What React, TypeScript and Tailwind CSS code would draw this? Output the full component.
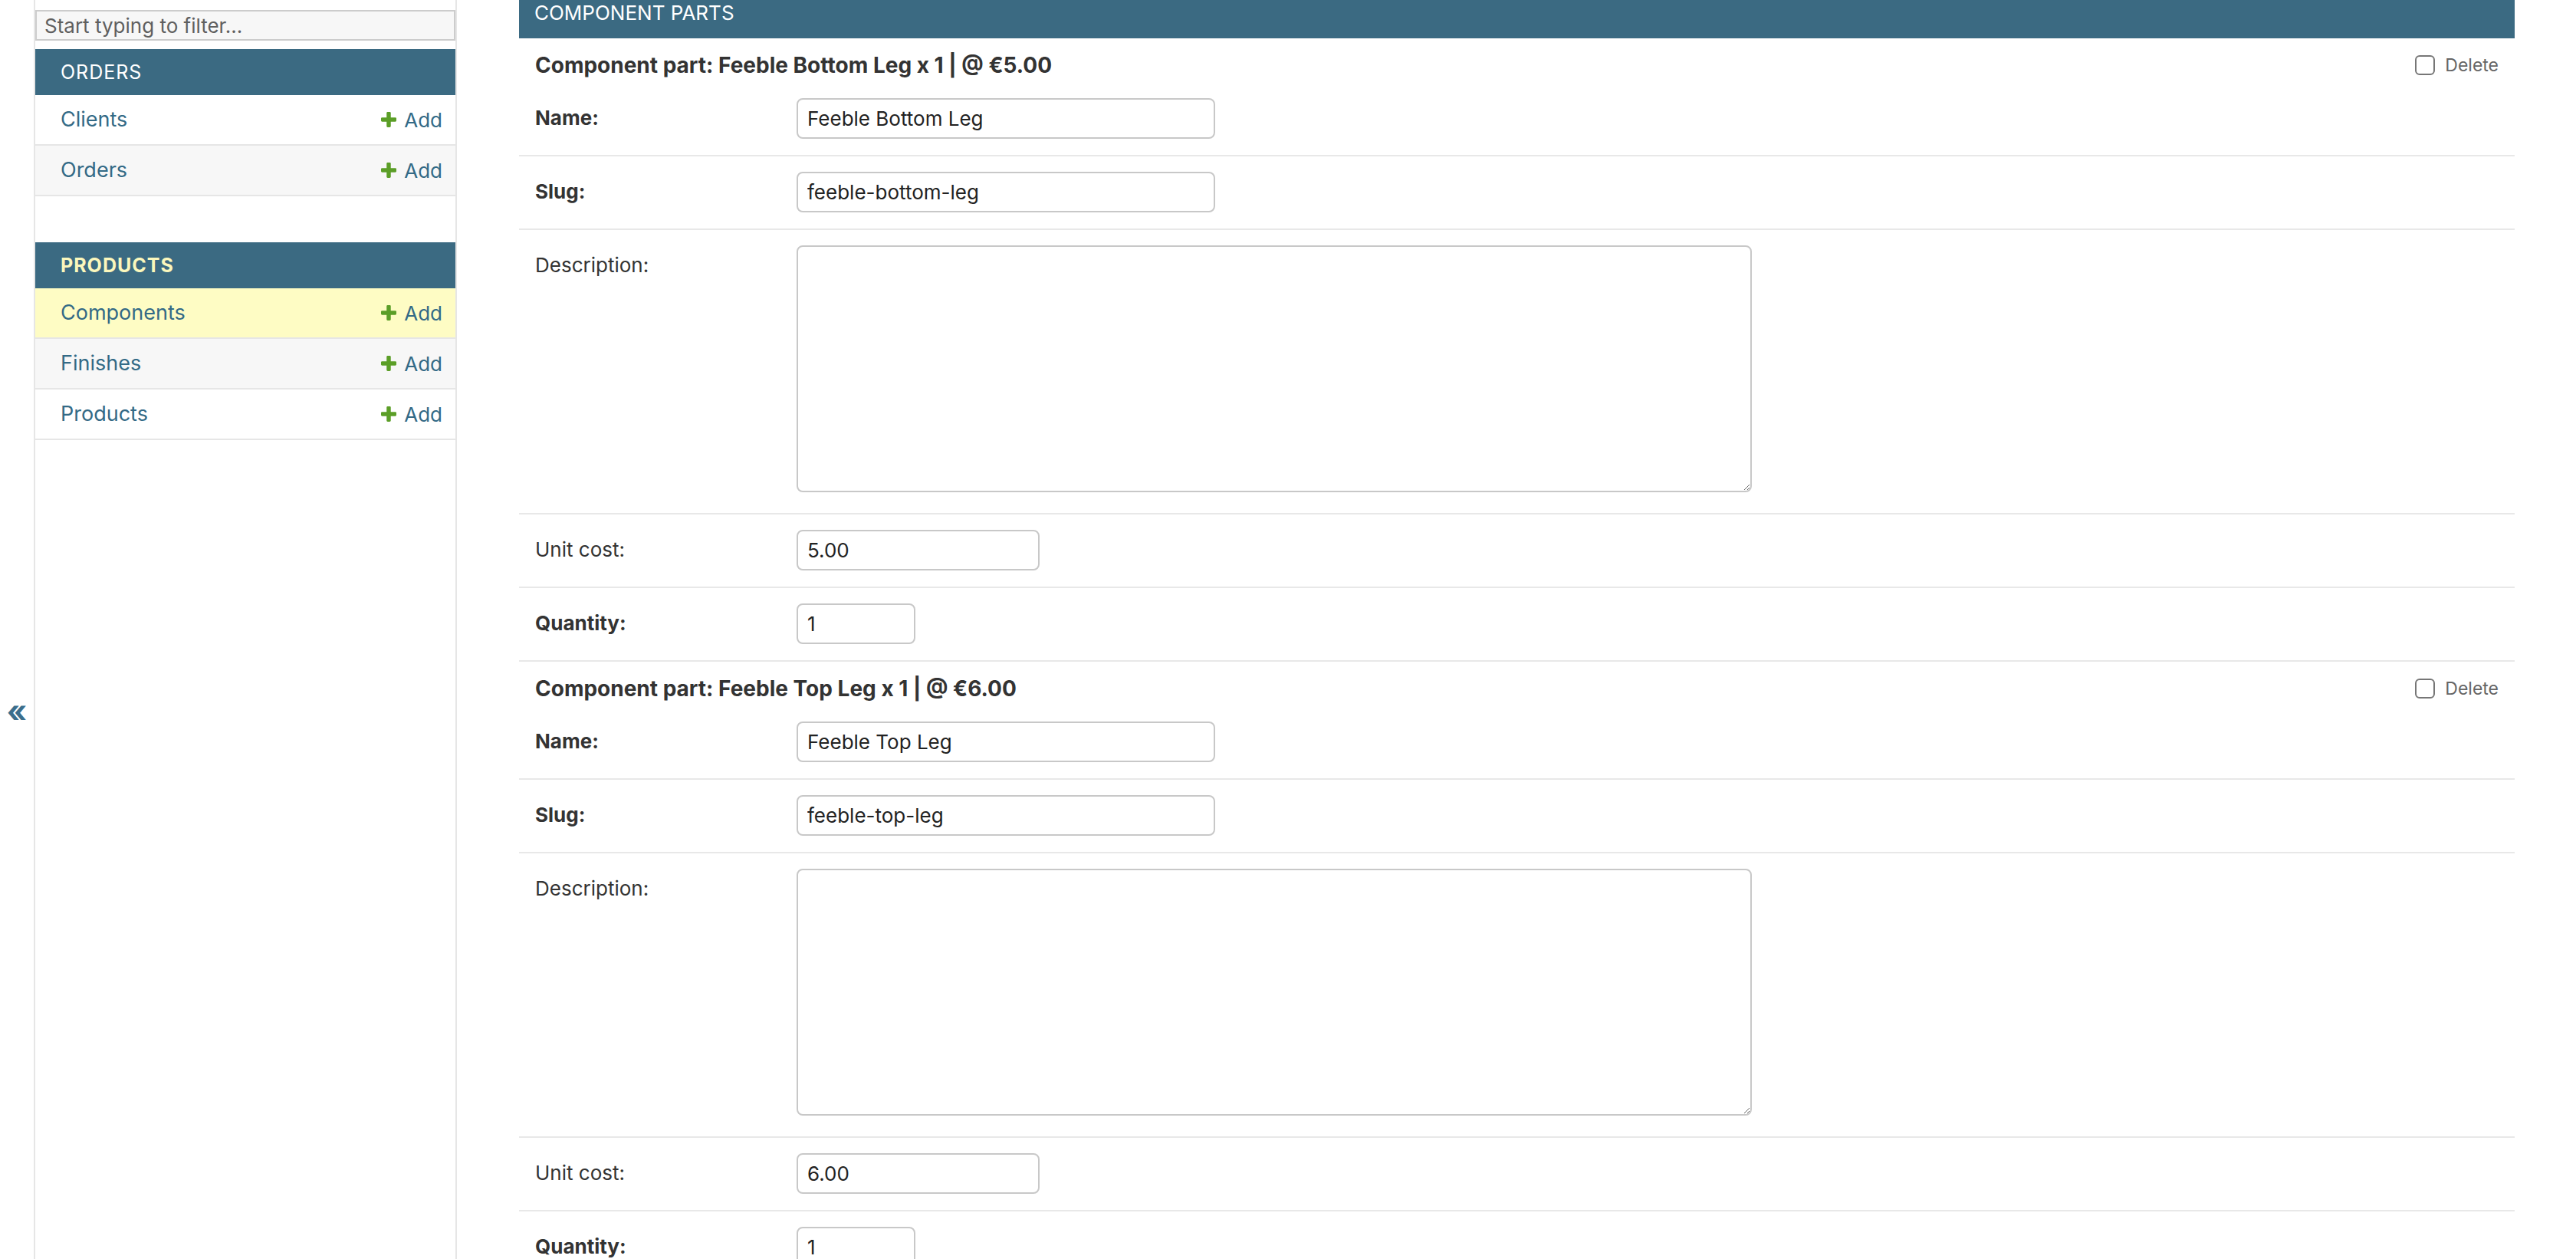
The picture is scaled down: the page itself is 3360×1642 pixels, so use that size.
import type { ReactNode } from "react";

const FONT = "font-['Inter','Noto_Sans',sans-serif]";

// green plus used by the "Add" links
function PlusIcon() {
  return (
    <svg viewBox="192 192 1408 1408" className="w-[20px] h-[20px]" aria-hidden>
      <path
        fill="#5b9e27"
        d="M1600 796v192q0 40-28 68t-68 28h-416v416q0 40-28 68t-68 28h-192q-40 0-68-28t-28-68v-416h-416q-40 0-68-28t-28-68v-192q0-40 28-68t68-28h416v-416q0-40 28-68t68-28h192q40 0 68 28t28 68v416h416q40 0 68 28t28 68z"
      />
    </svg>
  );
}

function NavRow({ label, bg }: { label: string; bg: string }) {
  return (
    <div
      className={
        "h-[66px] flex items-center justify-between pl-[33px] pr-[17px] border-b-2 border-[#e6e6e6] " +
        bg
      }
    >
      <span className="text-[27px] text-[#336a86]">{label}</span>
      <span className="flex items-center gap-[10px] text-[26px] text-[#336a86]">
        <PlusIcon />
        Add
      </span>
    </div>
  );
}

function NavModule({
  title,
  current,
  children,
}: {
  title: string;
  current?: boolean;
  children: ReactNode;
}) {
  return (
    <div>
      <div
        className={
          "h-[60px] flex items-center pl-[33px] pt-[2px] bg-[#3b6a82] text-[25px] tracking-[1px] " +
          (current ? "font-bold text-[#fbf7bc]" : "text-white")
        }
      >
        {title}
      </div>
      {children}
    </div>
  );
}

function FormRow({
  label,
  required,
  tall,
  children,
}: {
  label: string;
  required?: boolean;
  tall?: boolean;
  children: ReactNode;
}) {
  return (
    <div
      className={
        "flex border-b-2 border-[#e8e8e8] pl-[21px] pt-[20px] " +
        (tall ? "pb-[27px]" : "pb-[21px]")
      }
    >
      <label
        className={
          "w-[341px] shrink-0 h-[53px] pb-[3px] flex items-center text-[26px] text-[#333] " +
          (required ? "font-bold" : "font-normal")
        }
      >
        {label}
      </label>
      {children}
    </div>
  );
}

function TextInput({ value, w }: { value: string; w: string }) {
  return (
    <input
      defaultValue={value}
      className={
        "h-[53px] border-2 border-[#c8c8c8] rounded-[8px] px-[12px] text-[26px] text-[#222] bg-white outline-none " +
        w
      }
    />
  );
}

function ComponentPart({
  title,
  name,
  slug,
  cost,
}: {
  title: string;
  name: string;
  slug: string;
  cost: string;
}) {
  return (
    <div>
      <div className="h-[58px] pt-[12px] flex items-center justify-between pl-[21px] pr-[21px]">
        <h3 className="text-[28px] font-bold text-[#333]">{title}</h3>
        <label className="flex items-center gap-[13px] text-[23px] text-[#666]">
          <span className="w-[26px] h-[26px] border-2 border-[#767676] rounded-[6px] bg-white" />
          Delete
        </label>
      </div>
      <FormRow label="Name:" required>
        <TextInput value={name} w="w-[546px]" />
      </FormRow>
      <FormRow label="Slug:" required>
        <TextInput value={slug} w="w-[546px]" />
      </FormRow>
      <FormRow label="Description:" tall>
        <textarea className="block w-[1246px] h-[322px] border-2 border-[#c8c8c8] rounded-[8px] bg-white outline-none" />
      </FormRow>
      <FormRow label="Unit cost:">
        <TextInput value={cost} w="w-[317px]" />
      </FormRow>
      <FormRow label="Quantity:" required>
        <TextInput value="1" w="w-[155px]" />
      </FormRow>
    </div>
  );
}

export default function App() {
  return (
    <div className={"flex h-[1642px] overflow-hidden bg-white " + FONT}>
      {/* Sidebar toggle */}
      <div className="w-[46px] shrink-0 border-r-2 border-[#e6e6e6] flex flex-col items-center pt-[908px]">
        <span className="text-[40px] font-bold leading-none text-[#3b6e8c]">«</span>
      </div>

      {/* Nav sidebar */}
      <nav className="w-[550px] shrink-0 border-r-2 border-[#e6e6e6]">
        <input
          placeholder="Start typing to filter..."
          className="mt-[13px] h-[40px] w-full border-2 border-[#cccccc] bg-[#f7f7f7] px-[10px] text-[26px] text-[#333] placeholder:text-[#5f5f5f] outline-none"
        />
        <div className="mt-[11px]">
          <NavModule title="ORDERS">
            <NavRow label="Clients" bg="bg-white" />
            <NavRow label="Orders" bg="bg-[#f7f7f7]" />
          </NavModule>
        </div>
        <div className="mt-[60px]">
          <NavModule title="PRODUCTS" current>
            <NavRow label="Components" bg="bg-[#fefcc4]" />
            <NavRow label="Finishes" bg="bg-[#f7f7f7]" />
            <NavRow label="Products" bg="bg-white" />
          </NavModule>
        </div>
      </nav>

      {/* Main content */}
      <main className="flex-1 pl-[81px] pr-[80px]">
        <h2 className="h-[50px] pl-[20px] pt-[4px] leading-none bg-[#3b6a82] text-[26px] text-white">
          COMPONENT PARTS
        </h2>
        <ComponentPart
          title="Component part: Feeble Bottom Leg x 1 | @ €5.00"
          name="Feeble Bottom Leg"
          slug="feeble-bottom-leg"
          cost="5.00"
        />
        <ComponentPart
          title="Component part: Feeble Top Leg x 1 | @ €6.00"
          name="Feeble Top Leg"
          slug="feeble-top-leg"
          cost="6.00"
        />
      </main>
    </div>
  );
}
